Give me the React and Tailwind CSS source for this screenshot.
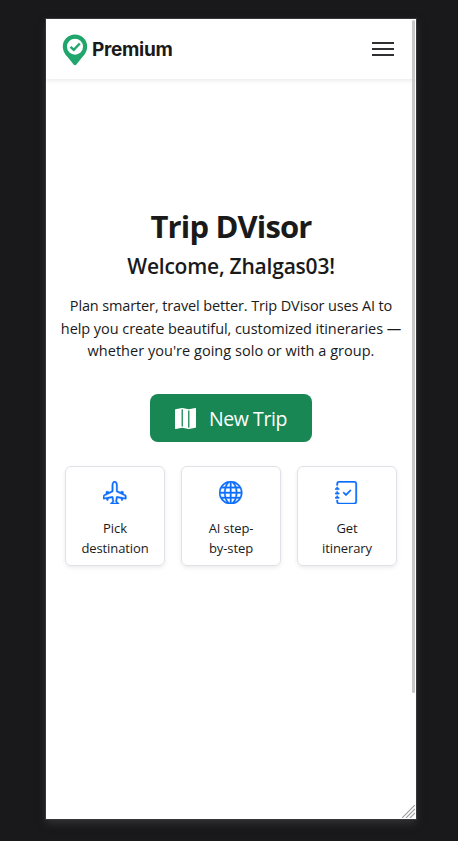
import { BsMapFill, BsAirplaneEngines, BsGlobe, BsJournalCheck } from "react-icons/bs";

const steps = [
  { Icon: BsAirplaneEngines, lines: ["Pick", "destination"] },
  { Icon: BsGlobe, lines: ["AI step-", "by-step"] },
  { Icon: BsJournalCheck, lines: ["Get", "itinerary"] },
];

function Logo() {
  return (
    <div className="flex items-center pt-0.5">
      <svg width="26" height="32" viewBox="0 0 26 32" className="shrink-0">
        <path d="M13 .5C6.200 .5 .8 5.800 .8 12.500c0 5.200 3 8.600 6.200 12.200 1.700 1.900 3.200 3.900 4.600 5.900.7 1 2.100 1 2.800 0 1.400-2 2.900-4 4.600-5.900 3.200-3.600 6.200-7 6.200-12.200C25.200 5.800 19.800 .5 13 .5Z" fill="#20a66c" />
        <circle cx="13" cy="12.700" r="8" fill="#fff" />
        <path d="m8.500 12.800 3.300 3.100 6-6.400" fill="none" stroke="#20a66c" strokeWidth="2.400" />
      </svg>
      <span className="ml-1 whitespace-nowrap font-['Inter',sans-serif] text-[19px] leading-8 font-bold tracking-[-0.3px]">Premium</span>
    </div>
  );
}

function Header() {
  return (
    <header className="flex h-[60px] shrink-0 items-center justify-between pr-[22px] pl-4 shadow-[0_2px_4px_rgba(0,0,0,0.075)]">
      <Logo />
      <div className="flex w-[22px] flex-col gap-1">
        <span className="h-0.5 bg-[#303033]" />
        <span className="h-0.5 bg-[#303033]" />
        <span className="h-0.5 bg-[#303033]" />
      </div>
    </header>
  );
}

export default function App() {
  return (
    <div className="h-[841px] w-[458px] overflow-hidden bg-[#19191b] pt-[19px] pl-[46px] font-['Open_Sans','Noto_Sans',sans-serif] text-[#1a1a1a]">
      <main className="relative flex h-[800px] w-[370px] flex-col bg-white shadow-[0_0_0_1px_#37373b,0_4px_8px_#333335]">
        <Header />
        <section className="flex flex-col items-center pt-[126px] text-center whitespace-nowrap">
          <h1 className="text-[31px] leading-[42px] font-bold tracking-[-0.85px]">Trip DVisor</h1>
          <h2 className="mt-px text-[21px] leading-[36px] font-semibold tracking-[-0.22px]">Welcome, Zhalgas03!</h2>
          <div className="mt-[11px] text-[14.500px] leading-[22.500px]">
            <p className="tracking-[-0.13px]">Plan smarter, travel better. Trip DVisor uses AI to</p>
            <p className="tracking-[-0.065px]">help you create beautiful, customized itineraries —</p>
            <p className="tracking-[0.03px]">whether you're going solo or with a group.</p>
          </div>
          <button className="mt-[31px] flex h-12 w-[162px] items-center justify-center gap-[13px] rounded-lg bg-[#198754] pt-0.5 text-[19.500px] text-white">
            <BsMapFill size={21} />
            <span className="tracking-[-0.45px]">New Trip</span>
          </button>
          <div className="mt-6 flex gap-4">
            {steps.map(({ Icon, lines }) => (
              <div key={lines[0]} className="flex h-[100px] w-[100px] flex-col items-center rounded-md border border-[#dee2e6] pt-[14px] shadow-[0_2px_4px_rgba(0,0,0,0.075)]">
                <Icon size={23.4} strokeWidth={0.25} className="text-[#0d6efd]" />
                <div className="mt-[14.600px] text-[13px] leading-5 tracking-[-0.1px]">
                  <p>{lines[0]}</p>
                  <p>{lines[1]}</p>
                </div>
              </div>
            ))}
          </div>
        </section>
        <div className="absolute top-px right-px h-[673px] w-[3px] rounded-full bg-[#c8c8c8]" />
        <svg className="absolute right-px bottom-px" width="13" height="13" viewBox="0 0 13 13" stroke="#a0a0a2" strokeWidth="1.200">
          <path d="M0 13 13 0M4 13l9-9M8 13l5-5" />
        </svg>
      </main>
    </div>
  );
}
